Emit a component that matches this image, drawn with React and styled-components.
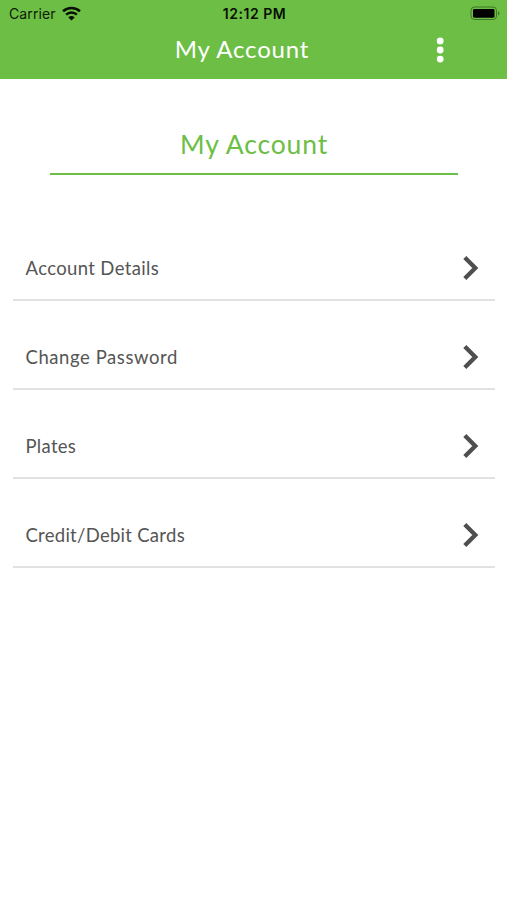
import React from "react";
import styled, { createGlobalStyle } from "styled-components";

const GREEN = "#6cbe45";

const GlobalStyle = createGlobalStyle`
  body { margin: 0; background: #fff; font-family: Lato, "Noto Sans", sans-serif; }
`;

const Screen = styled.div`
  width: 507px;
  height: 900px;
  overflow: hidden;
  background: #fff;
`;

const Header = styled.header`
  height: 79px;
  box-sizing: border-box;
  background: ${GREEN};
`;

const StatusBar = styled.div`
  display: grid;
  grid-template-columns: 1fr auto 1fr;
  align-items: center;
  height: 27px;
  padding: 0 7px 0 9px;
  color: #0c1a06;
  font: 400 14px/27px Inter, sans-serif;
`;

const Carrier = styled.div`
  display: flex;
  align-items: center;
  gap: 6px;
  letter-spacing: 0.12px;
`;

const Time = styled.div`
  color: #071003;
  font-weight: 600;
  letter-spacing: 0.55px;
`;

const Icon = styled.svg`
  display: block;
`;

const Battery = styled(Icon)`
  justify-self: end;
`;

const TitleBar = styled.div`
  display: grid;
  grid-template-columns: 1fr auto 1fr;
  align-items: center;
  height: 46px;
  padding-right: 12px;
`;

const NavTitle = styled.div`
  grid-column: 2;
  margin-right: 11px;
  color: #fff;
  font-size: 24px;
  line-height: 44px;
  padding-bottom: 2px;
  letter-spacing: 0.8px;
  white-space: nowrap;
`;

const MenuButton = styled.button`
  justify-self: end;
  display: flex;
  margin-right: 51px;
  padding: 0;
  border: 0;
  background: none;
`;

const Heading = styled.h1`
  width: 408px;
  height: 96px;
  margin: 0 0 0 50px;
  box-sizing: border-box;
  padding-top: 45px;
  border-bottom: 2px solid ${GREEN};
  color: ${GREEN};
  font-size: 26.5px;
  font-weight: 400;
  line-height: 40px;
  letter-spacing: 0.85px;
  text-align: center;
`;

const List = styled.ul`
  margin: 37px 12px 0 13px;
  padding: 0;
  list-style: none;
`;

const Row = styled.li`
  display: flex;
  align-items: flex-end;
  justify-content: space-between;
  height: 89px;
  box-sizing: border-box;
  padding: 0 16px 18px 12.5px;
  border-bottom: 2px solid #e1e1e1;
  color: #555;
`;

const Label = styled.span`
  font-size: 18.5px;
  line-height: 26px;
  letter-spacing: ${(p) => p.$tracking}px;
`;

const rows = [
  { label: "Account Details", tracking: 0.36 },
  { label: "Change Password", tracking: 0.57 },
  { label: "Plates", tracking: 0.3 },
  { label: "Credit/Debit Cards", tracking: 0.28 },
];

export default function App() {
  return (
    <Screen>
      <GlobalStyle />
      <Header>
        <StatusBar>
          <Carrier>
            Carrier
            <Icon width="19" height="15" viewBox="0 0 18 14" fill="none" stroke="#071003">
              <path d="M1 4.9A11.6 11.6 0 0 1 17 4.9" strokeWidth="2.4" />
              <path d="M3.9 8.1A7.3 7.3 0 0 1 14.1 8.1" strokeWidth="2.2" />
              <path d="M9 13.6 6 10.7A4.3 4.3 0 0 1 12 10.7Z" fill="#071003" stroke="none" />
            </Icon>
          </Carrier>
          <Time>12:12 PM</Time>
          <Battery width="30" height="15" viewBox="0 0 30 15">
            <rect x="1" y="1" width="25.5" height="12.5" rx="3.5" fill="none" stroke="#3f7826" />
            <rect x="3" y="3" width="21.5" height="8.7" rx="1.4" fill="#000" />
            <path d="M28 5.2a2.3 2.3 0 0 1 0 4.2Z" fill="#3f7826" />
          </Battery>
        </StatusBar>
        <TitleBar>
          <NavTitle>My Account</NavTitle>
          <MenuButton aria-label="More options">
            <Icon width="8" height="26" viewBox="0 0 8 26" fill="#fff">
              <circle cx="4.2" cy="3.9" r="3.4" />
              <circle cx="4.2" cy="13" r="3.4" />
              <circle cx="4.2" cy="22.1" r="3.4" />
            </Icon>
          </MenuButton>
        </TitleBar>
      </Header>
      <Heading>My Account</Heading>
      <List>
        {rows.map((row) => (
          <Row key={row.label}>
            <Label $tracking={row.tracking}>{row.label}</Label>
            <Icon width="16" height="26" viewBox="0 0 16 26" fill="none" stroke="#4f4f4f" strokeWidth="4.3">
              <path d="M1.8 2.5 12.3 13 1.8 23.5" />
            </Icon>
          </Row>
        ))}
      </List>
    </Screen>
  );
}
